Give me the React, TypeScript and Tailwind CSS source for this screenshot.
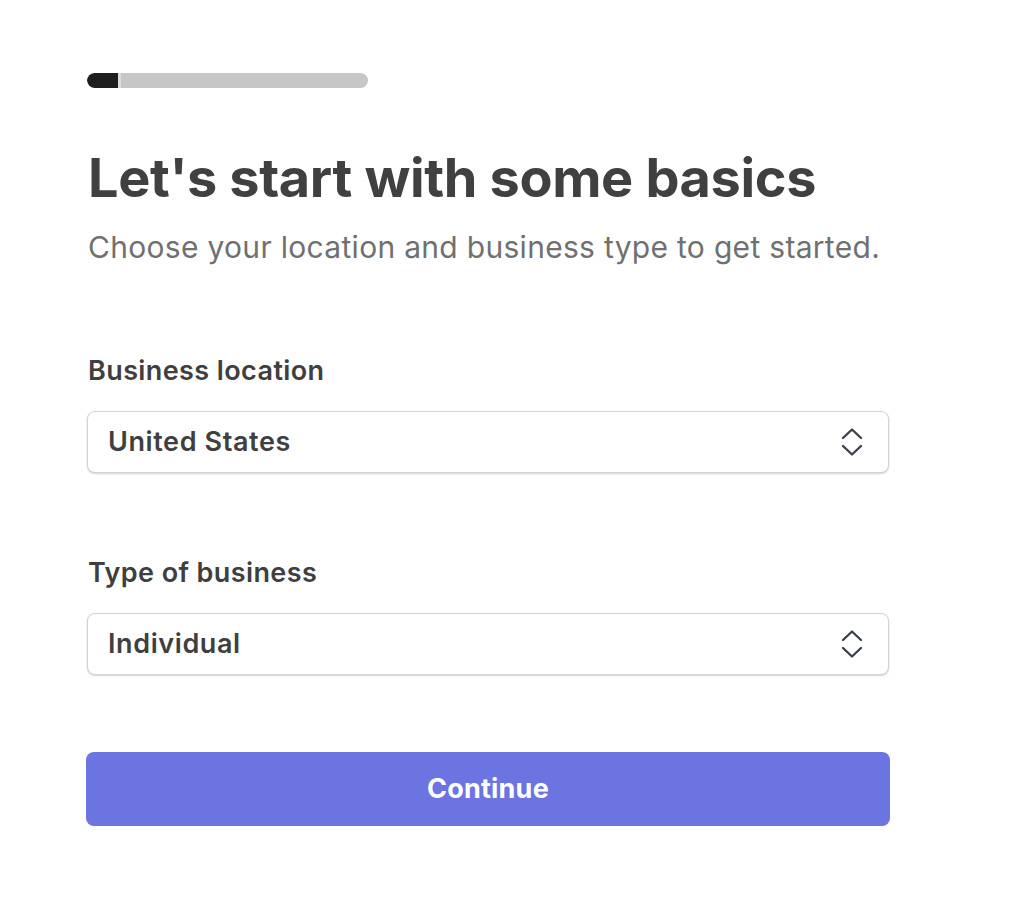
import React, { useState } from 'react';

const font = { fontFamily: 'Inter, "Noto Sans", sans-serif' };

const ChevronUpDown = () => (
  <svg width="24" height="30" viewBox="0 0 24 30" fill="none" stroke="#3d4250" strokeWidth="2.4" strokeLinecap="round" strokeLinejoin="round">
    <path d="M3 11 L12 2.5 L21 11" />
    <path d="M3 19 L12 27.5 L21 19" />
  </svg>
);

const SelectField = ({ label, value, options, onChange }: { label: string, value: string, options: string[], onChange: (v: string) => void }) => (
  <div className="flex flex-col">
    <label className="text-[27px] leading-[32px] font-semibold text-[#3f3f3f] tracking-[0.4px] pl-[1px]">{label}</label>
    <div className="relative mt-[24px] h-[62px] rounded-[8px] border border-[#d3d3d3] bg-white shadow-[0_1px_2px_rgba(0,0,0,0.18)]">
      <select
        value={value}
        onChange={(e) => onChange(e.target.value)}
        className="appearance-none w-full h-full bg-transparent pl-[20px] pr-12 text-[27px] font-semibold text-[#3f3f3f] tracking-[0.6px] outline-none"
        style={font}
      >
        {options.map((o) => <option key={o}>{o}</option>)}
      </select>
      <div className="absolute right-[24px] top-1/2 -translate-y-1/2 pointer-events-none">
        <ChevronUpDown />
      </div>
    </div>
  </div>
);

export default function App() {
  const [location, setLocation] = useState('United States');
  const [type, setType] = useState('Individual');

  return (
    <div className="min-h-[918px] w-full bg-white" style={font}>
      <div className="pl-[87px] pt-[73px] w-[889px]">
        <div className="flex w-[281px] h-[15px] rounded-full overflow-hidden bg-[#c6c6c6]">
          <div className="w-[31px] h-full bg-[#1e1e1e] rounded-l-full" />
          <div className="w-[3px] h-full bg-[#dcdcdc]" />
        </div>

        <h1 className="mt-[58px] text-[54px] leading-[64px] font-bold text-[#404040] tracking-[-0.35px] pl-[1px]">Let's start with some basics</h1>
        <p className="mt-[17px] text-[30px] leading-[40px] text-[#707070] tracking-[0.3px] pl-[1px]">Choose your location and business type to get started.</p>

        <div className="mt-[88px] flex flex-col gap-[84px]">
          <SelectField label="Business location" value={location} options={['United States', 'Canada', 'United Kingdom']} onChange={setLocation} />
          <SelectField label="Type of business" value={type} options={['Individual', 'Company', 'Non-profit']} onChange={setType} />
        </div>

        <button className="mt-[77px] -ml-[1px] w-[804px] h-[74px] rounded-[8px] bg-[#6b74e0] text-white text-[27px] font-bold tracking-[0.2px]">
          Continue
        </button>
      </div>
    </div>
  );
}
